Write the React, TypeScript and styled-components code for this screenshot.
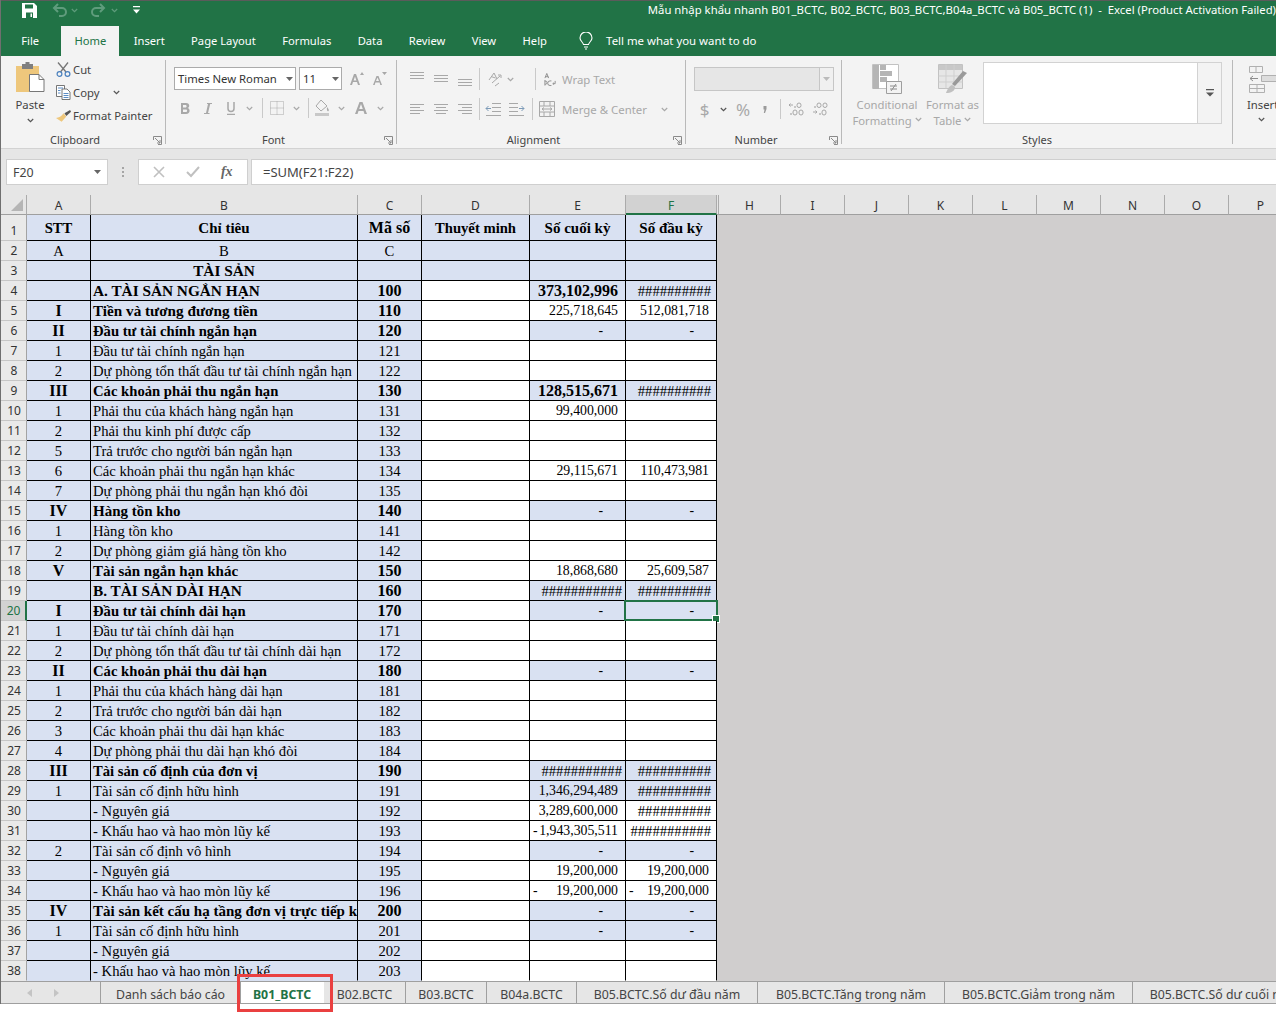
import React from 'react';
import styled, { createGlobalStyle } from 'styled-components';

const GREEN = '#217346';
const TINT = '#d9e1f2';
const DIM = '#a8a8a8';
const UI_FONT = '"Noto Sans", "Liberation Sans", sans-serif';

const GlobalStyle = createGlobalStyle`
  html, body {
    margin: 0;
    padding: 0;
    height: 100%;
    overflow: hidden;
    background: #fff;
  }
  * { box-sizing: border-box; }
`;

const Window = styled.div`
  position: relative;
  width: 1276px;
  height: 1012px;
  overflow: hidden;
  display: flex;
  flex-direction: column;
  font-family: ${UI_FONT};
  font-size: 11.3px;
  color: #444;
  &::after {
    content: '';
    position: absolute;
    left: 0;
    top: 0;
    bottom: 8px;
    width: 1px;
    background: #6f6f6f;
  }
`;

/* title bar */
const TitleBar = styled.div`
  height: 26px;
  flex: none;
  background: ${GREEN};
  border-top: 1px solid #5b5b5b;
  display: flex;
  align-items: flex-start;
  color: #fff;
  padding-left: 22px;
`;

const Qat = styled.div<{ $w: number }>`
  width: ${p => p.$w}px;
  height: 18px;
  flex: none;
  display: flex;
  align-items: center;
`;

const Title = styled.div`
  margin-left: auto;
  line-height: 18px;
  white-space: pre;
  font-size: 11.33px;
`;

/* ribbon tabs */
const TabRow = styled.div`
  height: 30px;
  flex: none;
  background: ${GREEN};
  display: flex;
  align-items: stretch;
  color: #fff;
  padding-left: 8px;
  font-size: 11.2px;
`;

const RibbonTab = styled.div<{ $active?: boolean }>`
  padding: 0 13.2px 1px;
  display: flex;
  align-items: center;
  white-space: nowrap;
  margin-right: ${p => (p.$active ? '1px' : '0')};
  background: ${p => (p.$active ? '#f3f3f3' : 'transparent')};
  color: ${p => (p.$active ? GREEN : '#fff')};
`;

const FileTab = styled(RibbonTab)`
  margin-right: 9px;
`;

const TellMe = styled.div`
  margin-left: 19px;
  display: flex;
  align-items: center;
  gap: 13px;
  padding-bottom: 1px;
  white-space: nowrap;
  font-size: 11.4px;
`;

/* ribbon */
const Ribbon = styled.div`
  height: 92px;
  flex: none;
  background: #f3f3f3;
  display: flex;
  padding-top: 4px;
  overflow: hidden;
`;

const Group = styled.div<{ $w: number }>`
  width: ${p => p.$w}px;
  height: 84px;
  flex: none;
  display: flex;
  flex-direction: column;
  border-right: 1px solid #b9b9b9;
`;

const GroupBody = styled.div`
  height: 72px;
  flex: none;
  display: flex;
`;

const GroupLabel = styled.div<{ $plain?: boolean }>`
  position: relative;
  height: 12px;
  line-height: 15px;
  text-align: center;
  font-size: 11px;
  white-space: nowrap;
  padding-right: ${p => (p.$plain ? 0 : 15)}px;
`;

const Launcher = styled.span`
  position: absolute;
  right: 3px;
  top: 4px;
  display: flex;
`;

const PasteButton = styled.div`
  width: 52px;
  margin-left: 4px;
  display: flex;
  flex-direction: column;
  align-items: center;
  padding-top: 2px;
  line-height: 15px;
  span { margin: 3px 0 6px; }
`;

const ClipList = styled.div`
  display: flex;
  flex-direction: column;
  margin-top: -2px;
`;

const ClipItem = styled.div`
  height: 23px;
  display: flex;
  align-items: center;
  gap: 2px;
  white-space: nowrap;
`;

const Stack = styled.div<{ $left: number; $top: number; $gap: number }>`
  display: flex;
  flex-direction: column;
  padding: ${p => p.$top}px 0 0 ${p => p.$left}px;
  gap: ${p => p.$gap}px;
`;

const ToolRow = styled.div`
  display: flex;
  align-items: center;
`;

const Slot = styled.div<{ $w: number; $h?: number }>`
  width: ${p => p.$w}px;
  height: ${p => p.$h ?? 20}px;
  flex: none;
  display: flex;
  align-items: center;
  justify-content: center;
  color: ${DIM};
`;

const Sep = styled.div<{ $h: number; $l: number; $r: number }>`
  width: 1px;
  height: ${p => p.$h}px;
  flex: none;
  background: #c9c9c9;
  margin: 0 ${p => p.$r}px 0 ${p => p.$l}px;
`;

const FontSelect = styled.div<{ $w: number }>`
  width: ${p => p.$w}px;
  height: 23px;
  flex: none;
  margin-right: 3px;
  background: #fff;
  border: 1px solid #ababab;
  display: flex;
  align-items: center;
  justify-content: space-between;
  padding: 0 2px 0 3px;
  color: #333;
  white-space: nowrap;
  font-size: 11.3px;
`;

const DimText = styled.span<{ $l: number }>`
  color: ${DIM};
  white-space: nowrap;
  margin-left: ${p => p.$l}px;
  font-size: 11.4px;
`;

const NumberSelect = styled.div`
  width: 140px;
  height: 24px;
  margin-left: 1px;
  background: #e6e6e6;
  border: 1px solid #c6c6c6;
  display: flex;
  justify-content: flex-end;
  align-items: center;
`;

const NumberArrow = styled.div`
  width: 14px;
  height: 100%;
  background: #f0f0f0;
  border-left: 1px solid #c6c6c6;
  display: flex;
  align-items: center;
  justify-content: center;
`;

const DollarText = styled.span`
  font-size: 17px;
  color: ${DIM};
`;

const Big = styled.div<{ $w: number }>`
  width: ${p => p.$w}px;
  flex: none;
  display: flex;
  flex-direction: column;
  align-items: center;
  line-height: 16px;
  color: ${DIM};
  white-space: nowrap;
  svg:first-child { margin-bottom: 3px; }
`;

const StyleGallery = styled.div`
  width: 239px;
  height: 62px;
  margin: 2px 0 0 3px;
  flex: none;
  background: #fff;
  border: 1px solid #d2d2d2;
  display: flex;
  justify-content: flex-end;
`;

const GalleryArrow = styled.div`
  width: 24px;
  background: #f3f3f3;
  border-left: 1px solid #d2d2d2;
  display: flex;
  align-items: center;
  justify-content: center;
`;

const InsertButton = styled.div`
  padding: 4px 0 0 14px;
  display: flex;
  flex-direction: column;
  align-items: flex-start;
  line-height: 16px;
  white-space: nowrap;
  svg:first-child { margin-bottom: 3px; }
  svg:last-child { margin: 4px 0 0 11px; }
`;

/* formula bar */
const FormulaArea = styled.div`
  height: 47px;
  flex: none;
  background: #e6e6e6;
  border-top: 1px solid #d2d2d2;
  padding: 10px 0 10px 6px;
  display: flex;
`;

const NameBox = styled.div`
  width: 102px;
  background: #fff;
  border: 1px solid #cfcfcf;
  display: flex;
  align-items: center;
  justify-content: space-between;
  padding: 0 6px 0 6px;
  color: #444;
  font-size: 12.4px;
`;

const Dots = styled.div`
  width: 30px;
  display: flex;
  flex-direction: column;
  align-items: center;
  justify-content: center;
  gap: 2px;
  i {
    width: 2px;
    height: 2px;
    background: #a5a5a5;
  }
`;

const FxBox = styled.div`
  width: 110px;
  background: #fff;
  border: 1px solid #cfcfcf;
  display: flex;
  align-items: center;
  justify-content: space-around;
  padding: 0 4px;
  margin-right: 3px;
`;

const Fx = styled.span`
  font-family: "Liberation Serif", serif;
  font-style: italic;
  font-weight: 700;
  font-size: 14px;
  color: #666;
`;

const FormulaInput = styled.div`
  flex: 1;
  background: #fff;
  border: 1px solid #cfcfcf;
  border-right: none;
  display: flex;
  align-items: center;
  padding-left: 11px;
  color: #444;
  font-size: 13px;
`;

/* sheet */
const Sheet = styled.div`
  flex: 1;
  min-height: 0;
  overflow: hidden;
  background: #d0cece;
  font-size: 12px;
`;

const COLUMNS = '27px 64px 267px 64px 108px 96px 91px';

const HeadRow = styled.div`
  height: 20px;
  display: flex;
  background: #e6e6e6;
`;

const HeadCorner = styled.div`
  width: 27px;
  flex: none;
  display: flex;
  align-items: flex-end;
  justify-content: flex-end;
  padding: 0 3px 3px 0;
  border-right: 1px solid #ababab;
  border-bottom: 1px solid #9f9f9f;
`;

const ColHead = styled.div<{ $w: number; $active?: boolean }>`
  width: ${p => p.$w}px;
  flex: none;
  display: flex;
  align-items: center;
  justify-content: center;
  padding-top: 2px;
  color: ${p => (p.$active ? GREEN : '#333')};
  background: ${p => (p.$active ? '#d2d2d2' : 'transparent')};
  border-right: 1px solid #ababab;
  border-bottom: ${p => (p.$active ? `2px solid ${GREEN}` : '1px solid #9f9f9f')};
`;

const Row = styled.div<{ $h: number }>`
  height: ${p => p.$h}px;
  display: grid;
  grid-template-columns: ${COLUMNS};
  grid-template-rows: ${p => p.$h}px;
  width: 717px;
  &:last-child > * {
    border-bottom-color: transparent;
  }
`;

const RowHead = styled.div<{ $active?: boolean }>`
  display: flex;
  align-items: flex-end;
  justify-content: center;
  line-height: 18px;
  padding-left: 2px;
  background: ${p => (p.$active ? '#d2d2d2' : '#e9e9e9')};
  color: ${p => (p.$active ? GREEN : '#333')};
  border-right: ${p => (p.$active ? `2px solid ${GREEN}` : '1px solid #a3a3a3')};
  border-bottom: 1px solid #c6c6c6;
`;

const Cell = styled.div<{ $tint?: boolean; $bold?: boolean; $align?: string; $pad?: number; $size?: number }>`
  position: relative;
  display: flex;
  align-items: center;
  justify-content: ${p => p.$align ?? 'flex-start'};
  padding-top: 1px;
  padding-right: ${p => p.$pad ?? 0}px;
  background: ${p => (p.$tint ? TINT : '#fff')};
  border-right: 1px solid #000;
  border-bottom: 1px solid #000;
  font-family: "Liberation Serif", "Times New Roman", serif;
  font-size: ${p => p.$size ?? 14.67}px;
  line-height: 16px;
  font-weight: ${p => (p.$bold ? 700 : 400)};
  color: #000;
  white-space: nowrap;
`;

const LabelCell = styled(Cell)`
  padding-left: 2px;
  overflow: hidden;
`;

const LeadDash = styled.span`
  position: absolute;
  left: 3px;
`;

const Selection = styled.div`
  position: absolute;
  left: -2px;
  top: -1px;
  right: -2px;
  bottom: -1px;
  border: 2px solid ${GREEN};
  &::after {
    content: '';
    position: absolute;
    right: -4px;
    bottom: -4px;
    width: 6px;
    height: 6px;
    background: ${GREEN};
    border: 1px solid #fff;
  }
`;

/* sheet tabs */
const SheetTabs = styled.div`
  height: 23px;
  flex: none;
  background: #e6e6e6;
  border-top: 1px solid #9f9f9f;
  border-bottom: 1px solid #9f9f9f;
  display: flex;
  font-size: 12.3px;
`;

const SheetNav = styled.div`
  width: 101px;
  flex: none;
  border-right: 1px solid #9f9f9f;
  display: flex;
  align-items: center;
  gap: 22px;
  padding-left: 27px;
`;

const SheetTab = styled.div<{ $w: number; $active?: boolean }>`
  position: relative;
  width: ${p => p.$w}px;
  flex: none;
  display: flex;
  align-items: center;
  justify-content: center;
  padding-top: 3px;
  white-space: nowrap;
  background: ${p => (p.$active ? '#fff' : 'transparent')};
  color: ${p => (p.$active ? GREEN : '#444')};
  font-weight: ${p => (p.$active ? 700 : 400)};
  border-right: 1px solid ${p => (p.$active ? 'transparent' : '#9f9f9f')};
`;

const RedBox = styled.div`
  position: absolute;
  left: -4px;
  right: -10px;
  top: -8px;
  bottom: -9px;
  border: 3px solid #ea4040;
`;

const Footer = styled.div`
  height: 8px;
  flex: none;
  background: #fff;
`;

/* icons */
const Chevron = ({ color = DIM }: { color?: string }) => (
  <svg width="7" height="5" viewBox="0 0 7 5" fill="none" stroke={color} strokeWidth="1.2">
    <path d="M.8 1 3.5 3.7 6.2 1" />
  </svg>
);

const Caret = ({ color = '#666' }: { color?: string }) => (
  <svg width="7" height="4" viewBox="0 0 7 4" fill={color}>
    <path d="M0 0h7L3.5 4z" />
  </svg>
);

const LauncherIcon = () => (
  <svg width="9" height="9" viewBox="0 0 9 9" fill="none" stroke="#8a8a8a">
    <path d="M.5 4V.5h8v8H5M2 2l5 5M7 4v3H4" />
  </svg>
);

const SaveIcon = () => (
  <svg width="15" height="15" viewBox="0 0 15 15">
    <path d="M0 0h12l3 3v12H0z" fill="#fff" />
    <path d="M3 1.5h8v4H3z" fill={GREEN} />
    <path d="M4 9.5h7V15H4z" fill={GREEN} />
    <path d="M8.5 10.5h1.5V14H8.5z" fill="#fff" />
  </svg>
);

const UndoIcon = ({ flip }: { flip?: boolean }) => (
  <svg width="16" height="14" viewBox="0 0 16 14" fill="none" stroke="#5f9c7c" strokeWidth="2" style={flip ? { transform: 'scaleX(-1)' } : undefined}>
    <path d="M6 1 2 5l4 4M2.5 5H10a4 4 0 0 1 0 8H7" />
  </svg>
);

const QatMore = () => (
  <svg width="7" height="8" viewBox="0 0 7 8" fill="#fff">
    <path d="M0 0h7v1.3H0zM0 3.500h7L3.500 7.500z" />
  </svg>
);

const BulbIcon = () => (
  <svg width="14" height="18" viewBox="0 0 14 18" fill="none" stroke="#fff" strokeWidth="1.1">
    <path d="M4.5 12.5C4 10 1 9 1 6a6 6 0 0 1 12 0c0 3-3 4-3.500 6.500zM5 15h4M6 17h2" />
  </svg>
);

const PasteIcon = () => (
  <svg width="30" height="32" viewBox="0 0 30 32">
    <path d="M1 4h23v26H1z" fill="#eec77c" />
    <path d="M7 2h11v5H7z" fill="#7f7f7f" />
    <path d="M10.500 0h4v3h-4z" fill="#7f7f7f" />
    <path d="M14.500 12.500H24l5 5v12H14.500z" fill="#fff" stroke="#777" />
    <path d="M24 12.500v5h5" fill="none" stroke="#777" />
  </svg>
);

const ScissorsIcon = () => (
  <svg width="15" height="15" viewBox="0 0 15 15" fill="none">
    <path d="M2 .5 10 10M12 .5 4.500 10" stroke="#777" strokeWidth="1.3" />
    <circle cx="3.500" cy="12" r="2.400" stroke="#4a80bd" strokeWidth="1.200" />
    <circle cx="11.500" cy="12" r="2.400" stroke="#4a80bd" strokeWidth="1.200" />
  </svg>
);

const CopyIcon = () => (
  <svg width="15" height="15" viewBox="0 0 15 15" fill="#fff" stroke="#666" strokeWidth=".9">
    <path d="M.5.500h8v11h-8z" />
    <path d="M6 4h5l3 3v7.500H6z" />
    <path d="M2 3h5M2 5.500h2.500M2 8h2.500M7.500 8.500h5M7.500 10.500h5M7.500 12.500h5" fill="none" stroke="#4a80bd" />
  </svg>
);

const BrushIcon = () => (
  <svg width="15" height="14" viewBox="0 0 16 14">
    <path d="M9 4 15 .5l1 2-5 4.500z" fill="#555" />
    <path d="M8 4 11 7.500 6 13 0 9c3 0 6-2 8-5z" fill="#eec77c" />
  </svg>
);

const Lines = ({ rows }: { rows: [number, number, number][] }) => (
  <svg width="14" height="16" viewBox="0 0 14 16" stroke={DIM} fill="none">
    {rows.map(([x1, x2, y]) => (
      <path key={y} d={`M${x1} ${y + 0.5}H${x2}`} />
    ))}
  </svg>
);

const Outdent = ({ flip }: { flip?: boolean }) => (
  <svg width="16" height="13" viewBox="0 0 16 13" fill="none" stroke={DIM} style={flip ? { transform: 'scaleX(-1)' } : undefined}>
    <path d="M7 .5h9M7 4.500h9M7 8.500h9M1 12.500h15" />
    <path d="M6 5.500H1M3.500 3 1 5.500 3.500 8" stroke="#7d9bb8" />
  </svg>
);

const Orientation = () => (
  <svg width="17" height="15" viewBox="0 0 17 15" fill="none" stroke={DIM}>
    <path d="M1 8 6 1l3 6M3 4.500l4.500 1.500M4 11l8-7M10 3h3v3M7 14l4-3" />
  </svg>
);

const MergeIcon = () => (
  <svg width="16" height="16" viewBox="0 0 16 16" fill="none" stroke={DIM}>
    <path d="M.5.500h15v15H.5zM.5 5h15M.5 11h15M5 .5V5M11 .5V5M5 11v4.500M11 11v4.500M3 8h10M3 8l2-1.500M3 8l2 1.500M13 8l-2-1.500M13 8l-2 1.500" />
  </svg>
);

const BorderIcon = () => (
  <svg width="14" height="14" viewBox="0 0 14 14" fill="none" stroke={DIM} strokeDasharray="1 1">
    <path d="M.5.500h13v13H.5zM7 .5v13M.5 7h13" />
  </svg>
);

const FillIcon = () => (
  <svg width="17" height="18" viewBox="0 0 17 18">
    <path d="M7 1 13 7 7 12 2 7z" fill="none" stroke={DIM} />
    <path d="M13 8c1.500 2 2.500 3 1.500 4s-2-1-1.500-4z" fill={DIM} />
    <path d="M1 14h14v3H1z" fill="#c8c8c8" />
  </svg>
);

const ConditionalIcon = () => (
  <svg width="30" height="30" viewBox="0 0 30 30">
    <path d="M.5.500h26v24H.5z" fill="#fff" stroke="#c2c2c2" />
    <path d="M8 1h6v5H8zM8 7h12v5H8zM8 13h7v5H8zM1 1h6v24H1z" fill="#b5b5b5" />
    <path d="M14.500 17.500h15v12h-15z" fill="#f3f3f3" stroke="#9e9e9e" />
    <path d="M18 22h7M18 25h7M24 20l-5 7" stroke="#8d8d8d" fill="none" />
  </svg>
);

const TableIcon = () => (
  <svg width="30" height="30" viewBox="0 0 30 30" fill="none">
    <path d="M.5.500h24v24H.5z" fill="#e6e6e6" stroke="#c2c2c2" />
    <path d="M1 1h23v5H1z" fill="#c8c8c8" />
    <path d="M.5 12h24M.5 18h24M8 .5v24M16 .5v24" stroke="#cfcfcf" />
    <path d="M29 9 17 22l-3-2 11-13z" fill="#9a9a9a" />
    <path d="M14 21c-3 1-5 5-6 8 5 0 9-2 9-6z" fill="#c0c0c0" />
  </svg>
);

const InsertCellsIcon = () => (
  <svg width="30" height="30" viewBox="0 0 30 30" fill="none" stroke="#b0b0b0">
    <path d="M2.500 2.500h13v6h-13zM9 2.500v6M2.500 20.500h15v8h-15zM10 20.500v8M2.500 24.500h15" />
    <path d="M14.500 11.500h16v6h-16z" fill="#ddd" />
    <path d="M11 14.500H3M6 12l-3 2.500L6 17" stroke="#8d8d8d" />
  </svg>
);

const CloseMark = () => (
  <svg width="12" height="12" viewBox="0 0 12 12" stroke="#c0c0c0" strokeWidth="1.600">
    <path d="m1 1 10 10M11 1 1 11" />
  </svg>
);

const CheckMark = () => (
  <svg width="14" height="12" viewBox="0 0 14 12" fill="none" stroke="#c0c0c0" strokeWidth="2">
    <path d="m1 6 4 4 8-9" />
  </svg>
);

const NavArrow = ({ flip }: { flip?: boolean }) => (
  <svg width="5" height="8" viewBox="0 0 5 8" fill="#c4c4c4" style={flip ? { transform: 'scaleX(-1)' } : undefined}>
    <path d="M0 0 5 4 0 8z" />
  </svg>
);

const Triangle = () => (
  <svg width="12" height="12" viewBox="0 0 12 12" fill="#b5b5b5">
    <path d="M12 0v12H0z" />
  </svg>
);

const GalleryMore = () => (
  <svg width="8" height="8" viewBox="0 0 8 8" fill="#555">
    <path d="M0 0h8v1.200H0zM0 3.500h8L4 7.500z" />
  </svg>
);

const CommaMark = () => (
  <svg width="4" height="7" viewBox="0 0 4 7" fill="#9a9a9a">
    <path d="M.5 0h3v3L2 7H.8l.7-3.500h-1z" />
  </svg>
);

const DecimalIcon = ({ more }: { more?: boolean }) => (
  <svg width="16" height="14" viewBox="0 0 16 14" fill="none" stroke={DIM}>
    {more ? (
      <>
        <circle cx="3" cy="5" r=".5" />
        <rect x="5" y="1" width="4" height="4.500" rx="2" />
        <rect x="11" y="1" width="4" height="4.500" rx="2" />
        <path d="M1 10h4M3.500 8.500 5 10l-1.500 1.500" />
        <circle cx="8" cy="12" r=".5" />
        <rect x="10" y="8" width="4" height="5" rx="2" />
      </>
    ) : (
      <>
        <path d="M5 3H1M2.500 1.500 1 3l1.500 1.500" />
        <circle cx="7" cy="5" r=".5" />
        <rect x="9" y="1" width="4" height="4.500" rx="2" />
        <circle cx="3" cy="12" r=".5" />
        <rect x="5" y="8" width="4" height="5" rx="2" />
        <rect x="11" y="8" width="4" height="5" rx="2" />
      </>
    )}
  </svg>
);

/* data */
type Line = {
  a?: string;
  b: string;
  c?: string;
  e?: string;
  f?: string;
  bold?: boolean;
  tint?: boolean;
  center?: boolean;
  plain?: boolean; // amounts not bold although the row is
  labelSize?: number;
};

const H10 = '##########';
const H11 = '###########';

const LINES: Line[] = [
  { a: 'STT', b: 'Chỉ tiêu', c: 'Mã số', e: 'Số cuối kỳ', f: 'Số đầu kỳ', bold: true, tint: true, center: true, labelSize: 15 },
  { a: 'A', b: 'B', c: 'C', tint: true, center: true },
  { b: 'TÀI SẢN', bold: true, tint: true, center: true, labelSize: 15.3 },
  { b: 'A. TÀI SẢN NGẮN HẠN', c: '100', e: '373,102,996', f: H10, bold: true, tint: true, labelSize: 15.3 },
  { a: 'I', b: 'Tiền và tương đương tiền', c: '110', e: '225,718,645', f: '512,081,718', bold: true, plain: true, labelSize: 15.2 },
  { a: 'II', b: 'Đầu tư tài chính ngắn hạn', c: '120', e: '-', f: '-', bold: true, tint: true },
  { a: '1', b: 'Đầu tư tài chính ngắn hạn', c: '121' },
  { a: '2', b: 'Dự phòng tổn thất đầu tư tài chính ngắn hạn', c: '122' },
  { a: 'III', b: 'Các khoản phải thu ngắn hạn', c: '130', e: '128,515,671', f: H10, bold: true, tint: true },
  { a: '1', b: 'Phải thu của khách hàng ngắn hạn', c: '131', e: '99,400,000' },
  { a: '2', b: 'Phải thu kinh phí được cấp', c: '132' },
  { a: '5', b: 'Trả trước cho người bán ngắn hạn', c: '133' },
  { a: '6', b: 'Các khoản phải thu ngắn hạn khác', c: '134', e: '29,115,671', f: '110,473,981' },
  { a: '7', b: 'Dự phòng phải thu ngắn hạn khó đòi', c: '135' },
  { a: 'IV', b: 'Hàng tồn kho', c: '140', e: '-', f: '-', bold: true, tint: true, labelSize: 15 },
  { a: '1', b: 'Hàng tồn kho', c: '141' },
  { a: '2', b: 'Dự phòng giảm giá hàng tồn kho', c: '142' },
  { a: 'V', b: 'Tài sản ngắn hạn khác', c: '150', e: '18,868,680', f: '25,609,587', bold: true, plain: true, labelSize: 15 },
  { b: 'B. TÀI SẢN DÀI HẠN', c: '160', e: H11, f: H10, bold: true, tint: true, labelSize: 15.3 },
  { a: 'I', b: 'Đầu tư tài chính dài hạn', c: '170', e: '-', f: '-', bold: true, tint: true },
  { a: '1', b: 'Đầu tư tài chính dài hạn', c: '171' },
  { a: '2', b: 'Dự phòng tổn thất đầu tư tài chính dài hạn', c: '172' },
  { a: 'II', b: 'Các khoản phải thu dài hạn', c: '180', e: '-', f: '-', bold: true, tint: true },
  { a: '1', b: 'Phải thu của khách hàng dài hạn', c: '181' },
  { a: '2', b: 'Trả trước cho người bán dài hạn', c: '182' },
  { a: '3', b: 'Các khoản phải thu dài hạn khác', c: '183' },
  { a: '4', b: 'Dự phòng phải thu dài hạn khó đòi', c: '184' },
  { a: 'III', b: 'Tài sản cố định của đơn vị', c: '190', e: H11, f: H10, bold: true, tint: true },
  { a: '1', b: 'Tài sản cố định hữu hình', c: '191', e: '1,346,294,489', f: H10, tint: true },
  { b: '- Nguyên giá', c: '192', e: '3,289,600,000', f: H10 },
  { b: '- Khấu hao và hao mòn lũy kế', c: '193', e: '~1,943,305,511', f: H11 },
  { a: '2', b: 'Tài sản cố định vô hình', c: '194', e: '-', f: '-', tint: true },
  { b: '- Nguyên giá', c: '195', e: '19,200,000', f: '19,200,000' },
  { b: '- Khấu hao và hao mòn lũy kế', c: '196', e: '~19,200,000', f: '~19,200,000' },
  { a: 'IV', b: 'Tài sản kết cấu hạ tầng đơn vị trực tiếp kinh doanh', c: '200', e: '-', f: '-', bold: true, tint: true, labelSize: 15 },
  { a: '1', b: 'Tài sản cố định hữu hình', c: '201', e: '-', f: '-', tint: true },
  { b: '- Nguyên giá', c: '202' },
  { b: '- Khấu hao và hao mòn lũy kế', c: '203' },
];

const COL_HEADS: [string, number][] = [
  ['A', 64], ['B', 267], ['C', 64], ['D', 108], ['E', 96], ['F', 91], ['', 2], ['H', 62],
  ['I', 64], ['J', 64], ['K', 64], ['L', 64], ['M', 64], ['N', 64], ['O', 64], ['P', 64],
];

const SHEETS: [string, number][] = [
  ['Danh sách báo cáo', 140],
  ['B01_BCTC', 83],
  ['B02.BCTC', 82],
  ['B03.BCTC', 81],
  ['B04a.BCTC', 90],
  ['B05.BCTC.Số dư đầu năm', 181],
  ['B05.BCTC.Tăng trong năm', 187],
  ['B05.BCTC.Giảm trong năm', 188],
  ['B05.BCTC.Số dư cuối năm', 183],
];

function amountProps(value: string | undefined, line: Line, lastCol: boolean) {
  if (line.center) return { $align: 'center', $bold: line.bold, $size: line.labelSize };
  const hash = value?.startsWith('#');
  const bold = line.bold && !line.plain && value !== '-';
  let pad = 7;
  if (value === '-') pad = 22;
  if (hash) pad = lastCol ? 5 : 3;
  return {
    $align: 'flex-end',
    $pad: pad,
    $bold: !!bold && !hash,
    $size: hash ? 14.67 : bold ? 16 : 13.8,
  };
}

function AmountCell({ value, line, lastCol, selected }: { value?: string; line: Line; lastCol: boolean; selected?: boolean }) {
  const negative = value?.startsWith('~');
  return (
    <Cell $tint={line.tint} {...amountProps(value, line, lastCol)}>
      {negative && <LeadDash>-</LeadDash>}
      {negative ? value?.slice(1) : value}
      {selected && <Selection />}
    </Cell>
  );
}

function SheetRow({ line, n }: { line: Line; n: number }) {
  const active = n === 20;
  const romanSize = line.bold && !line.center ? 16 : undefined;
  return (
    <Row $h={n === 1 ? 26 : 20}>
      <RowHead $active={active}>{n}</RowHead>
      <Cell $tint $bold={line.bold} $align="center" $size={romanSize}>{line.a}</Cell>
      {line.center ? (
        <Cell $tint $bold={line.bold} $align="center" $size={line.labelSize}>{line.b}</Cell>
      ) : (
        <LabelCell $tint $bold={line.bold} $size={line.labelSize}>{line.b}</LabelCell>
      )}
      <Cell $tint $bold={line.bold} $align="center" $size={line.bold ? 16 : undefined}>{line.c}</Cell>
      <Cell $tint={n <= 3} $bold={line.bold} $align="center">{n === 1 ? 'Thuyết minh' : ''}</Cell>
      <AmountCell value={line.e} line={line} lastCol={false} />
      <AmountCell value={line.f} line={line} lastCol selected={active} />
    </Row>
  );
}

export default function App() {
  return (
    <Window>
      <GlobalStyle />
      <TitleBar>
        <Qat $w={30}><SaveIcon /></Qat>
        <Qat $w={19}><UndoIcon /></Qat>
        <Qat $w={19}><Chevron color="#5f9c7c" /></Qat>
        <Qat $w={21}><UndoIcon flip /></Qat>
        <Qat $w={22}><Chevron color="#5f9c7c" /></Qat>
        <Qat $w={10}><QatMore /></Qat>
        <Title>Mẫu nhập khẩu nhanh B01_BCTC, B02_BCTC, B03_BCTC,B04a_BCTC và B05_BCTC (1)  -  Excel (Product Activation Failed)</Title>
      </TitleBar>

      <TabRow>
        <FileTab>File</FileTab>
        <RibbonTab $active>Home</RibbonTab>
        <RibbonTab>Insert</RibbonTab>
        <RibbonTab>Page Layout</RibbonTab>
        <RibbonTab>Formulas</RibbonTab>
        <RibbonTab>Data</RibbonTab>
        <RibbonTab>Review</RibbonTab>
        <RibbonTab>View</RibbonTab>
        <RibbonTab>Help</RibbonTab>
        <TellMe><BulbIcon />Tell me what you want to do</TellMe>
      </TabRow>

      <Ribbon>
        <Group $w={166}>
          <GroupBody>
            <PasteButton>
              <PasteIcon />
              <span>Paste</span>
              <Chevron color="#555" />
            </PasteButton>
            <ClipList>
              <ClipItem><ScissorsIcon />Cut</ClipItem>
              <ClipItem><CopyIcon />Copy<Slot $w={30}><Chevron color="#555" /></Slot></ClipItem>
              <ClipItem><BrushIcon />Format Painter</ClipItem>
            </ClipList>
          </GroupBody>
          <GroupLabel>Clipboard<Launcher><LauncherIcon /></Launcher></GroupLabel>
        </Group>

        <Group $w={231}>
          <GroupBody>
            <Stack $left={8} $top={7} $gap={8}>
              <ToolRow>
                <FontSelect $w={122}>Times New Roman<Caret /></FontSelect>
                <FontSelect $w={43}>11<Caret /></FontSelect>
                <Slot $w={25}>
                  <svg width="15" height="14" viewBox="0 0 15 14" fill={DIM}><path d="M0 13 4 2h2l4 11H8L7 10H3l-1 3zM3.600 8.500h2.800L5 4.500zM10 3l2-3 2 3z" /></svg>
                </Slot>
                <Slot $w={20}>
                  <svg width="14" height="14" viewBox="0 0 14 14" fill={DIM}><path d="M0 13 3.500 4h2L9 13H7.300l-.7-2.500H2.400L1.700 13zM3 9h3L4.500 5.500zM9 0h5l-2.500 3z" /></svg>
                </Slot>
              </ToolRow>
              <ToolRow>
                <Slot $w={22}><svg width="9" height="11" viewBox="0 0 9 11" fill={DIM}><path d="M0 0h5c4 0 4 4.500 1.500 5C9.500 5.500 9.500 11 5 11H0zM2 2v2.500h2.500c1.500 0 1.500-2.500 0-2.500zM2 6.500V9h3c1.500 0 1.500-2.500 0-2.500z" /></svg></Slot>
                <Slot $w={24}><svg width="8" height="11" viewBox="0 0 8 11" fill={DIM}><path d="M3 0h5v1H6.200L4 10h1.500v1H0v-1h2L4 1H3z" /></svg></Slot>
                <Slot $w={22}><svg width="10" height="13" viewBox="0 0 10 13" fill="none" stroke={DIM} strokeWidth="1.500"><path d="M2 0v6.500a3 3 0 0 0 6 0V0M1 12.500h8" /></svg></Slot>
                <Slot $w={15}><Chevron /></Slot>
                <Sep $h={20} $l={5} $r={0} />
                <Slot $w={27}><BorderIcon /></Slot>
                <Slot $w={13}><Chevron /></Slot>
                <Sep $h={20} $l={5} $r={0} />
                <Slot $w={26}><FillIcon /></Slot>
                <Slot $w={12}><Chevron /></Slot>
                <Slot $w={28}><svg width="12" height="12" viewBox="0 0 12 12" fill={DIM}><path d="M0 12 4.500 0h3L12 12H9.500l-1-3h-5l-1 3zM4.200 7h3.600L6 2z" /></svg></Slot>
                <Slot $w={10}><Chevron /></Slot>
              </ToolRow>
            </Stack>
          </GroupBody>
          <GroupLabel>Font<Launcher><LauncherIcon /></Launcher></GroupLabel>
        </Group>

        <Group $w={289}>
          <GroupBody>
            <Stack $left={12} $top={8} $gap={8}>
              <ToolRow>
                <Slot $w={16} $h={22}><Lines rows={[[0, 14, 1], [0, 14, 4], [0, 14, 7]]} /></Slot>
                <Slot $w={8} $h={22} />
                <Slot $w={16} $h={22}><Lines rows={[[0, 14, 4], [0, 14, 7], [0, 14, 10]]} /></Slot>
                <Slot $w={8} $h={22} />
                <Slot $w={16} $h={22}><Lines rows={[[0, 14, 8], [0, 14, 11], [0, 14, 14]]} /></Slot>
                <Sep $h={22} $l={6} $r={7} />
                <Slot $w={18} $h={22}><Orientation /></Slot>
                <Slot $w={10} $h={22}><Chevron /></Slot>
                <Sep $h={22} $l={20} $r={8} />
                <Slot $w={13} $h={22}>
                  <svg width="14" height="15" viewBox="0 0 14 15" fill="none" stroke="#8a8a8a"><path d="M1 6 3 1l2 5M1.500 4.500h3M1 14V8M1 9.500c3-1.500 3 4 0 3M8 9H6.500a2 2 0 0 0 0 5H8M12 9v3H9.500M10.500 11l-1 1 1 1" /></svg>
                </Slot>
                <DimText $l={5}>Wrap Text</DimText>
              </ToolRow>
              <ToolRow>
                <Slot $w={16}><Lines rows={[[0, 14, 3], [0, 10, 6], [0, 14, 9], [0, 10, 12]]} /></Slot>
                <Slot $w={8} />
                <Slot $w={16}><Lines rows={[[0, 14, 3], [2, 12, 6], [0, 14, 9], [2, 12, 12]]} /></Slot>
                <Slot $w={8} />
                <Slot $w={16}><Lines rows={[[0, 14, 3], [4, 14, 6], [0, 14, 9], [4, 14, 12]]} /></Slot>
                <Sep $h={22} $l={6} $r={5} />
                <Slot $w={16}><Outdent /></Slot>
                <Slot $w={8} />
                <Slot $w={16}><Outdent flip /></Slot>
                <Sep $h={22} $l={7} $r={6} />
                <Slot $w={16}><MergeIcon /></Slot>
                <DimText $l={7}>Merge &amp; Center</DimText>
                <Slot $w={36}><Chevron /></Slot>
              </ToolRow>
            </Stack>
          </GroupBody>
          <GroupLabel>Alignment<Launcher><LauncherIcon /></Launcher></GroupLabel>
        </Group>

        <Group $w={156}>
          <GroupBody>
            <Stack $left={7} $top={7} $gap={8}>
              <NumberSelect><NumberArrow><Caret color="#bbb" /></NumberArrow></NumberSelect>
              <ToolRow>
                <Slot $w={23}><DollarText>$</DollarText></Slot>
                <Slot $w={14}><Chevron color="#555" /></Slot>
                <Slot $w={26}><DollarText>%</DollarText></Slot>
                <Slot $w={18}><CommaMark /></Slot>
                <Sep $h={20} $l={6} $r={3} />
                <Slot $w={24}><DecimalIcon /></Slot>
                <Slot $w={24}><DecimalIcon more /></Slot>
              </ToolRow>
            </Stack>
          </GroupBody>
          <GroupLabel>Number<Launcher><LauncherIcon /></Launcher></GroupLabel>
        </Group>

        <Group $w={391}>
          <GroupBody>
            <Stack $left={7} $top={4} $gap={0}>
              <ToolRow>
                <Big $w={76}>
                  <ConditionalIcon />
                  <span>Conditional</span>
                  <span>Formatting <Chevron /></span>
                </Big>
                <Big $w={55}>
                  <TableIcon />
                  <span>Format as</span>
                  <span>Table <Chevron /></span>
                </Big>
              </ToolRow>
            </Stack>
            <StyleGallery>
              <GalleryArrow><GalleryMore /></GalleryArrow>
            </StyleGallery>
          </GroupBody>
          <GroupLabel $plain>Styles</GroupLabel>
        </Group>

        <InsertButton>
          <InsertCellsIcon />
          <span>Insert</span>
          <Chevron color="#555" />
        </InsertButton>
      </Ribbon>

      <FormulaArea>
        <NameBox>F20<Caret /></NameBox>
        <Dots><i /><i /><i /></Dots>
        <FxBox><CloseMark /><CheckMark /><Fx>fx</Fx></FxBox>
        <FormulaInput>=SUM(F21:F22)</FormulaInput>
      </FormulaArea>

      <Sheet>
        <HeadRow>
          <HeadCorner><Triangle /></HeadCorner>
          {COL_HEADS.map(([label, w], i) => (
            <ColHead key={i} $w={w} $active={label === 'F'}>{label}</ColHead>
          ))}
        </HeadRow>
        {LINES.map((line, i) => (
          <SheetRow key={i} line={line} n={i + 1} />
        ))}
      </Sheet>

      <SheetTabs>
        <SheetNav><NavArrow flip /><NavArrow /></SheetNav>
        {SHEETS.map(([name, w]) => (
          <SheetTab key={name} $w={w} $active={name === 'B01_BCTC'}>
            {name}
            {name === 'B01_BCTC' && <RedBox />}
          </SheetTab>
        ))}
      </SheetTabs>
      <Footer />
    </Window>
  );
}
